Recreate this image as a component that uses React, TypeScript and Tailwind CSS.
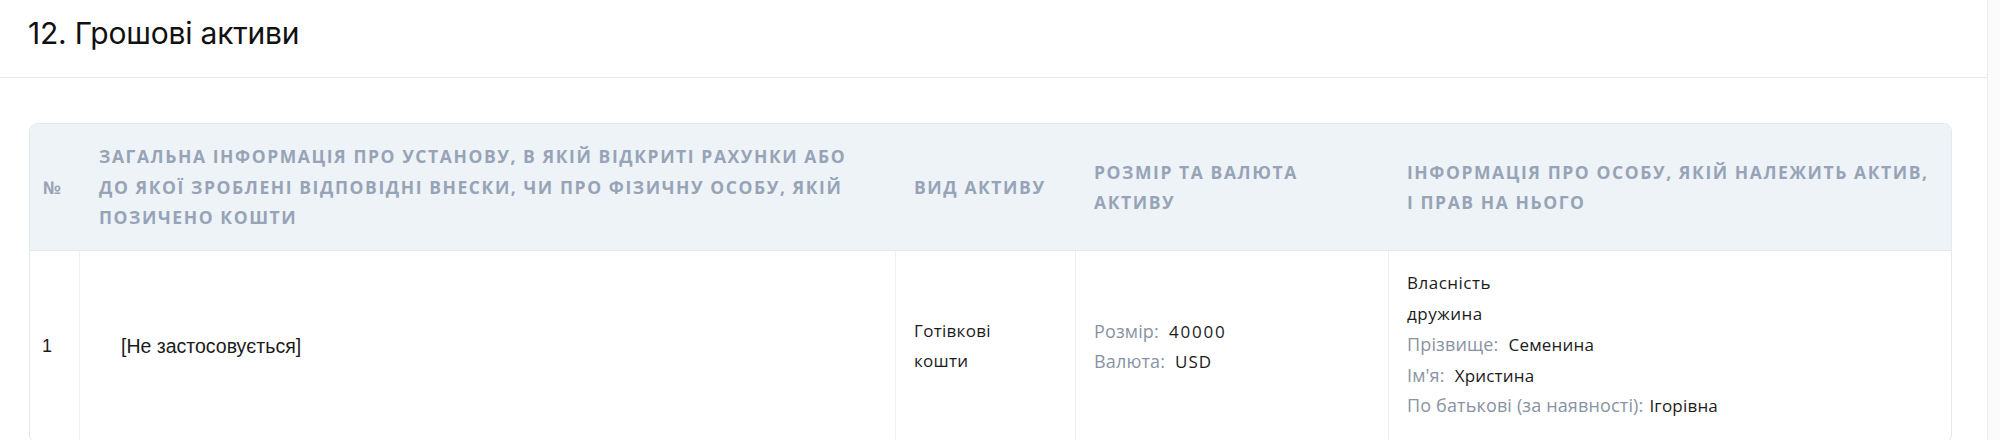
import React from "react";

const Label = ({ children }: { children: React.ReactNode }) => (
  <span className="text-[18px] tracking-[0.15px] text-[#8a93a3]">{children}</span>
);

const Line = ({ children }: { children: React.ReactNode }) => (
  <div className="h-[30.5px] whitespace-nowrap">{children}</div>
);

export default function App() {
  return (
    <div className="flex min-h-[440px] w-full bg-white">
      <div className="flex-1">
        <div className="flex h-[78px] items-center border-b border-[#e6e8eb] pb-[11px] pl-[28px]">
          <h2
            className="text-[30px] leading-none text-[#111] tracking-[-0.2px]"
            style={{ fontFamily: "Inter, 'Noto Sans', sans-serif" }}
          >
            12. Грошові активи
          </h2>
        </div>
        <div className="pl-[29px] pr-[35px] pt-[45px]">
          <div className="overflow-hidden rounded-lg border border-[#e4e9ef]">
            <div
              className="grid grid-cols-[50px_816px_180px_313px_1fr] bg-[#eef3f8] h-[126px] items-center text-[17.5px] font-bold uppercase tracking-[0.09em] text-[#97a3b6] leading-[30.5px]"
              style={{ fontFamily: "'Open Sans', 'Noto Sans', sans-serif" }}
            >
              <div className="pl-[13px]">№</div>
              <div className="pl-[19px]">
                Загальна інформація про установу, в якій відкриті рахунки або
                <br />
                до якої зроблені відповідні внески, чи про фізичну особу, якій
                <br />
                позичено кошти
              </div>
              <div className="pl-[18px]">Вид активу</div>
              <div className="pl-[18px]">
                Розмір та валюта
                <br />
                активу
              </div>
              <div className="pl-[18px]">
                Інформація про особу, якій належить актив,
                <br />і прав на нього
              </div>
            </div>
            <div
              className="grid grid-cols-[50px_816px_180px_313px_1fr] border-t border-[#e4e9ef] text-[17px] leading-[30.5px] text-[#1b1b1b]"
              style={{ fontFamily: "'Open Sans', 'Noto Sans', sans-serif" }}
            >
              <div
                className="flex items-center border-r border-[#eceff3] pl-[12px] text-[18px]"
                style={{ fontFamily: "'Liberation Sans', Arial, sans-serif" }}
              >
                1
              </div>
              <div
                className="flex items-center border-r border-[#eceff3] pl-[41px] text-[19.5px]"
                style={{ fontFamily: "'Liberation Sans', Arial, sans-serif" }}
              >
                [Не застосовується]
              </div>
              <div className="flex flex-col justify-center border-r border-[#eceff3] pl-[18px] tracking-[0.3px]">
                <Line>Готівкові</Line>
                <Line>кошти</Line>
              </div>
              <div className="flex flex-col justify-center border-r border-[#eceff3] pl-[18px]">
                <Line>
                  <Label>Розмір:</Label>
                  <span className="ml-[10px] tracking-[1.8px]">40000</span>
                </Line>
                <Line>
                  <Label>Валюта:</Label>
                  <span className="ml-[10px] tracking-[1px]">USD</span>
                </Line>
              </div>
              <div className="flex flex-col justify-center pt-[17px] pb-[21px] pl-[18px] tracking-[0.2px]">
                <Line>
                  <span className="tracking-[0.5px]">Власність</span>
                </Line>
                <Line>
                  <span className="tracking-[0.5px]">дружина</span>
                </Line>
                <Line>
                  <Label>Прізвище:</Label>
                  <span className="ml-[10px]">Семенина</span>
                </Line>
                <Line>
                  <Label>Ім'я:</Label>
                  <span className="ml-[10px]">Христина</span>
                </Line>
                <Line>
                  <Label>По батькові (за наявності):</Label>
                  <span className="ml-[6px]">Ігорівна</span>
                </Line>
              </div>
            </div>
          </div>
        </div>
      </div>
      <div className="w-[13px] shrink-0 border-l border-[#ececec] bg-[#fbfbfb]" />
    </div>
  );
}
